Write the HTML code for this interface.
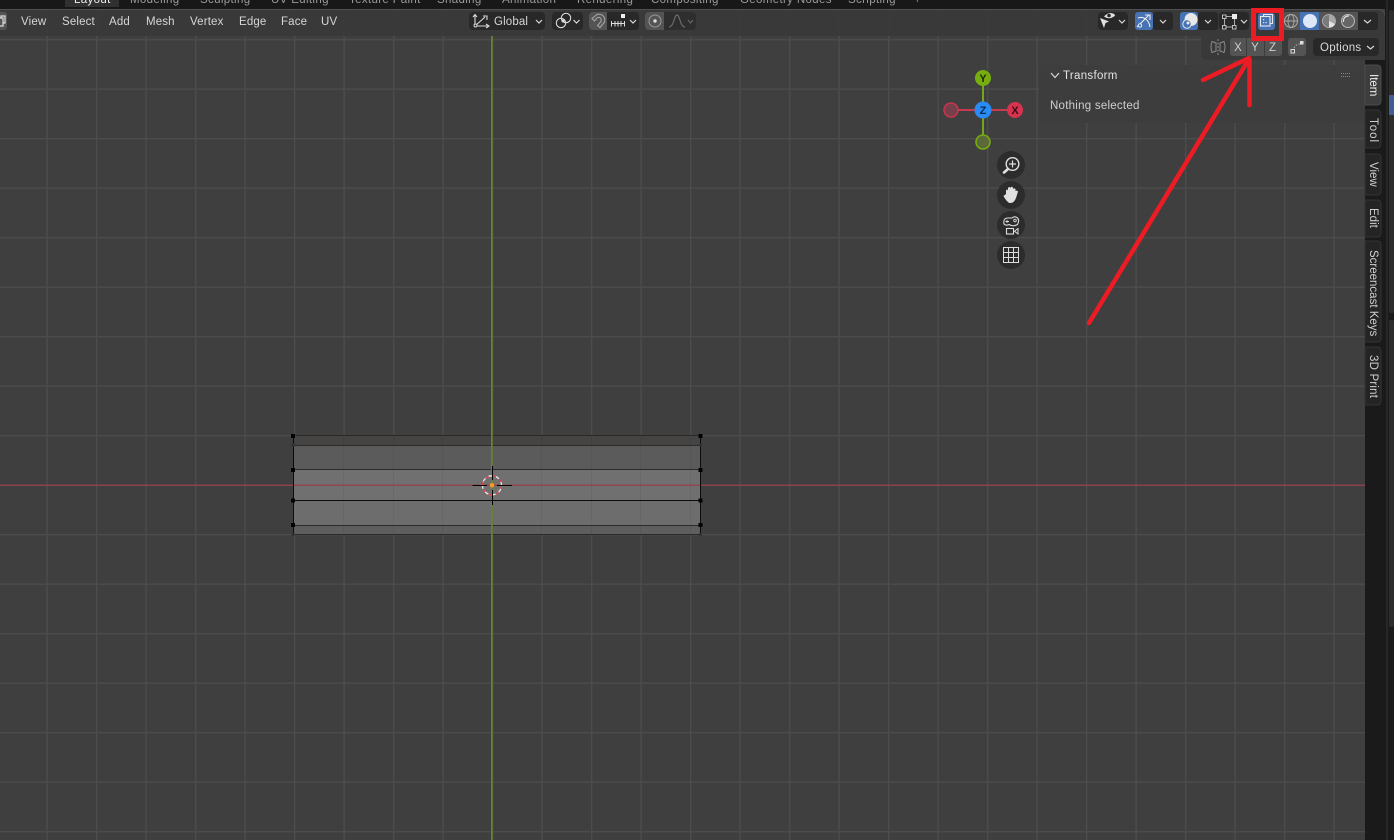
<!DOCTYPE html>
<html><head><meta charset="utf-8"><style>
html,body{margin:0;padding:0;background:#3f3f3f;width:1394px;height:840px;overflow:hidden}
svg{display:block}
text{font-family:"Liberation Sans",sans-serif}
.m{font-size:11.5px;fill:#d6d6d6;letter-spacing:.15px}
.tb{font-size:11.5px;fill:#9a9a9a;letter-spacing:.35px}
.v{font-size:11.5px;fill:#d4d4d4;letter-spacing:.25px}
.ic{fill:none;stroke:#d8d8d8;stroke-width:1.1}
.ch{fill:none;stroke:#d8d8d8;stroke-width:1.2}
.tab{font-size:11.5px;fill:#d0d0d0}
</style></head><body>
<svg width="1394" height="840" viewBox="0 0 1394 840" xmlns="http://www.w3.org/2000/svg">
<defs>
<pattern id="gv" x="-3" y="0" width="49.5" height="840" patternUnits="userSpaceOnUse"><rect x="0" y="0" width="1.4" height="840" fill="#4c4c4c"/></pattern>
<pattern id="gh" x="0" y="39" width="1394" height="49.5" patternUnits="userSpaceOnUse"><rect x="0" y="0" width="1394" height="1.4" fill="#4c4c4c"/></pattern>
</defs>
<rect width="1394" height="840" fill="#3f3f3f"/>
<rect width="1365" height="840" fill="url(#gv)"/>
<rect width="1365" height="840" fill="url(#gh)"/>

<!-- mesh -->
<rect x="293" y="435" width="407" height="10" fill="#464442"/>
<rect x="293" y="445" width="407" height="25" fill="#5b5b5b"/>
<rect x="293" y="470" width="407" height="30" fill="#707070"/>
<rect x="293" y="500" width="407" height="25" fill="#6d6d6d"/>
<rect x="293" y="525" width="407" height="10" fill="#5e5e5e"/>
<g fill="#000" opacity=".05"><rect x="343" y="435" width="1" height="100"/><rect x="393" y="435" width="1" height="100"/><rect x="442" y="435" width="1" height="100"/><rect x="541" y="435" width="1" height="100"/><rect x="591" y="435" width="1" height="100"/><rect x="640" y="435" width="1" height="100"/><rect x="690" y="435" width="1" height="100"/></g>
<rect x="0" y="484.600" width="1365" height="1.300" fill="#96404c"/>
<g stroke="#2a2a2a" stroke-width="1" fill="none">
<path d="M293 435.500H700M293 445.500H700M293 469.500H700M293 525.500H700M293 534.500H700"/>
</g>
<rect x="491" y="36" width="1.700" height="804" fill="#64862a"/>
<path d="M293 500.500H700M293.500 435V535M700.500 435V535" stroke="#0c0c0c" stroke-width="1" fill="none"/>
<g fill="#000">
<rect x="291" y="434" width="4" height="4"/><rect x="698.500" y="434" width="4" height="4"/>
<rect x="291" y="468" width="4" height="4"/><rect x="698.500" y="468" width="4" height="4"/>
<rect x="291" y="498.500" width="4" height="4"/><rect x="698.500" y="498.500" width="4" height="4"/>
<rect x="291" y="523" width="4" height="4"/><rect x="698.500" y="523" width="4" height="4"/>
</g>
<g fill="#333"><rect x="291.500" y="443.500" width="3" height="3"/><rect x="699" y="443.500" width="3" height="3"/><rect x="291.500" y="533" width="3" height="3"/><rect x="699" y="533" width="3" height="3"/></g>
<!-- cursor -->
<circle cx="492" cy="485.300" r="9.500" fill="none" stroke="#e8e8e8" stroke-width="1.300"/>
<circle cx="492" cy="485.300" r="9.500" fill="none" stroke="#d8373f" stroke-width="1.300" stroke-dasharray="3.700 3.770"/>
<path d="M472.500 485.500H487M497 485.500H512M492.500 466V480M492.500 490V505" stroke="#000" stroke-width="1"/>
<circle cx="492" cy="485.300" r="2.300" fill="#f59a23"/>

<!-- top bar -->
<rect x="0" y="0" width="1394" height="9" fill="#181818"/>
<rect x="65" y="0" width="54" height="7" fill="#303030"/>
<text x="74" y="3" class="tb" style="fill:#eee">Layout</text>
<text x="130" y="3" class="tb">Modeling</text>
<text x="200" y="3" class="tb">Sculpting</text>
<text x="271" y="3" class="tb">UV Editing</text>
<text x="349" y="3" class="tb">Texture Paint</text>
<text x="437" y="3" class="tb">Shading</text>
<text x="502" y="3" class="tb">Animation</text>
<text x="577" y="3" class="tb">Rendering</text>
<text x="651" y="3" class="tb">Compositing</text>
<text x="740" y="3" class="tb">Geometry Nodes</text>
<text x="848" y="3" class="tb">Scripting</text>
<text x="914" y="3" class="tb">+</text>
<!-- header -->
<path d="M0 9.500H1378q7 0 7 7V36H0Z" fill="#393939" fill-opacity=".93"/>
<path d="M0 9.500H1378q7 0 7 7" fill="none" stroke="#4f4f4f" stroke-width="1"/>
<rect x="-8" y="12" width="15" height="18" rx="3" fill="#545454"/>
<path d="M-2 18H3V26H-2M1 18V16H5V23H3" fill="none" stroke="#ddd" stroke-width="1.200"/>
<text class="m" x="21" y="25">View</text>
<text class="m" x="62" y="25">Select</text>
<text class="m" x="109" y="25">Add</text>
<text class="m" x="146" y="25">Mesh</text>
<text class="m" x="190" y="25">Vertex</text>
<text class="m" x="239" y="25">Edge</text>
<text class="m" x="281" y="25">Face</text>
<text class="m" x="321" y="25">UV</text>

<!-- center widgets -->
<rect x="469" y="12" width="76" height="18" rx="4" fill="#282828"/>
<path d="M475 15V26H488M475 26L485 17" class="ic"/><circle cx="475.500" cy="25.500" r="1.500" fill="#282828" stroke="#d8d8d8"/><path d="M473 17L475 14.500L477 17M486 24L489 26L486 28M483 16H487V20" class="ic"/>
<text class="m" x="494" y="25">Global</text>
<path d="M536 20L539 23L542 20" class="ch"/>
<rect x="552" y="12" width="31" height="18" rx="4" fill="#282828"/>
<circle cx="561" cy="23" r="4.700" class="ic"/><circle cx="566" cy="18" r="4.700" class="ic"/><circle cx="563" cy="21" r="1.500" fill="#ddd"/>
<path d="M573.500 20L576.500 23L579.500 20" class="ch"/>
<rect x="589" y="12" width="50" height="18" rx="4" fill="#282828"/>
<path d="M589 16a4 4 0 0 1 4-4H607V30H593a4 4 0 0 1-4-4Z" fill="#545454"/>
<path d="M592 18.500L597 14.500C602 13.500 606 17 604.500 22L600 27.500L597.500 25.500L601 21.500C602 18 599 16.500 597 18L594.500 21Z" fill="none" stroke="#aaa" stroke-width="1"/>
<path d="M611.500 23.500H624.500M611.500 21V26.500M615 21V26.500M618 21V26.500M621 21V26.500M624.500 21V26.500" stroke="#ddd" stroke-width="1" fill="none"/>
<rect x="621" y="14" width="4" height="4" fill="#eee"/>
<path d="M630 20L633 23L636 20" class="ch"/>
<rect x="645" y="12" width="51" height="18" rx="4" fill="#2e2e2e"/>
<path d="M645 16a4 4 0 0 1 4-4H664V30H649a4 4 0 0 1-4-4Z" fill="#545454"/>
<circle cx="655" cy="21" r="6" fill="none" stroke="#999" stroke-width="1"/><circle cx="655" cy="21" r="1.700" fill="#ddd"/>
<path d="M669 27C674 27 674 15 677 15C680 15 680 27 685 27" fill="none" stroke="#777" stroke-width="1"/>
<path d="M688 20L690.500 23L693 20" fill="none" stroke="#666" stroke-width="1.200"/>

<!-- right header -->
<rect x="1098" y="12" width="30" height="18" rx="4" fill="#282828"/>
<path d="M1100 18L1109 21.500L1105.500 23L1104 28Z" fill="#e0e0e0"/>
<path d="M1104 16.500Q1109 11 1114 14Q1116 15.500 1114 16.500Q1109 20 1104 16.500Z" fill="#e0e0e0"/><circle cx="1109" cy="15.500" r="1.800" fill="#282828"/>
<path d="M1119 20L1122 23L1125 20" class="ch"/>
<rect x="1135" y="12" width="18" height="18" rx="3" fill="#4772b3"/>
<rect x="1153" y="12" width="20" height="18" rx="3" fill="#282828"/>
<path d="M1137 27L1149 15M1138 18C1144 16 1149 20 1150 27M1145 15H1150V20" fill="none" stroke="#eee" stroke-width="1.100"/><circle cx="1140" cy="25.500" r="1.700" fill="#4772b3" stroke="#eee"/>
<path d="M1160 20L1163 23L1166 20" class="ch"/>
<rect x="1180" y="12" width="18" height="18" rx="3" fill="#4772b3"/>
<rect x="1198" y="12" width="20" height="18" rx="3" fill="#282828"/>
<circle cx="1191" cy="19.500" r="6.500" fill="#e8e8e8"/><circle cx="1187" cy="24" r="4.200" fill="#4772b3" stroke="#e8e8e8"/><circle cx="1188" cy="23" r="1.500" fill="#e8e8e8"/>
<path d="M1205 20L1208 23L1211 20" class="ch"/>
<rect x="1219" y="12" width="30" height="18" rx="4" fill="#282828"/>
<rect x="1224.500" y="16.500" width="10" height="10.500" fill="none" stroke="#aaa" stroke-width="1"/>
<rect x="1222.500" y="25.500" width="3.500" height="3.500" fill="#282828" stroke="#ccc" stroke-width=".9"/><rect x="1232.500" y="25.500" width="3.500" height="3.500" fill="#282828" stroke="#ccc" stroke-width=".9"/><rect x="1222.500" y="15" width="3.500" height="3.500" fill="#282828" stroke="#ccc" stroke-width=".9"/><rect x="1232" y="14" width="5" height="5" fill="#eee"/>
<path d="M1241 20L1244 23L1247 20" class="ch"/>
<!-- xray -->
<rect x="1258" y="13" width="17" height="17" rx="3" fill="#4772b3"/>
<path d="M1263.500 16V14.500H1272.500V23.500H1270" fill="none" stroke="#e8e8e8" stroke-width="1.100"/>
<rect x="1260.500" y="16.500" width="9.500" height="9.500" fill="none" stroke="#e8e8e8" stroke-width="1.100"/>
<rect x="1263" y="19" width="1.200" height="1.200" fill="#eee"/><rect x="1263" y="22" width="1.200" height="1.200" fill="#eee"/><rect x="1265.500" y="22" width="1.200" height="1.200" fill="#eee"/>
<!-- shading -->
<rect x="1282" y="12" width="96" height="18" rx="4" fill="#282828"/>
<path d="M1282 16a4 4 0 0 1 4-4H1300V30H1286a4 4 0 0 1-4-4Z" fill="#545454"/>
<rect x="1300" y="12" width="19" height="18" fill="#4772b3"/>
<rect x="1319" y="12" width="39" height="18" fill="#545454"/>
<circle cx="1291" cy="21" r="6.500" fill="none" stroke="#aaa" stroke-width="1"/><ellipse cx="1291" cy="21" rx="3" ry="6.500" fill="none" stroke="#aaa" stroke-width=".9"/><path d="M1284.500 21H1297.500" stroke="#aaa"/>
<circle cx="1310" cy="21" r="7" fill="#dfe8f7"/>
<circle cx="1329" cy="21" r="6.500" fill="#7a7a7a" stroke="#bbb" stroke-width=".8"/><path d="M1329 21V14.500A6.500 6.500 0 0 1 1335 24Z" fill="#a8a8a8"/><path d="M1329 21L1335 24A6.500 6.500 0 0 1 1329 27.500Z" fill="#e4e4e4"/>
<circle cx="1348" cy="21" r="6.500" fill="#666" stroke="#bbb" stroke-width="1"/><path d="M1343.500 22A5 5 0 0 1 1349 16" fill="none" stroke="#ddd" stroke-width="1.300"/>
<rect x="1358" y="12" width="20" height="18" rx="3" fill="#282828"/>
<path d="M1364 20L1367.500 23L1371 20" class="ch"/>

<!-- right strip -->
<rect x="1365" y="60" width="29" height="780" fill="#1a1a1a"/>
<rect x="1385" y="0" width="9" height="840" fill="#1a1a1a"/>
<rect x="1386" y="0" width="2" height="840" fill="#272727"/>
<rect x="1389" y="10" width="5" height="303" rx="2" fill="#2d2d2d"/>
<rect x="1389" y="95" width="5" height="20" fill="#3f5f93"/>
<rect x="1389" y="320" width="5" height="307" rx="2" fill="#2d2d2d"/>

<!-- sub header right -->
<path d="M1201 36H1385V60H1207a6 6 0 0 1-6-6Z" fill="#393939"/>
<path d="M1212 41.500L1216 43V51L1212 52.500Q1210 47 1212 41.500ZM1224 41.500L1220 43V51L1224 52.500Q1226 47 1224 41.500Z" fill="none" stroke="#8a8a8a" stroke-width="1"/>
<path d="M1218 39V55" stroke="#8a8a8a" stroke-dasharray="2 1.500"/>
<rect x="1230" y="38" width="52" height="18" rx="3" fill="#545454"/>
<path d="M1246.500 38V56M1264.500 38V56" stroke="#3d3d3d"/>
<text x="1238" y="51" text-anchor="middle" style="font-size:11.500px;fill:#d0d0d0">X</text>
<text x="1255" y="51" text-anchor="middle" style="font-size:11.500px;fill:#d0d0d0">Y</text>
<text x="1272.500" y="51" text-anchor="middle" style="font-size:11.500px;fill:#d0d0d0">Z</text>
<rect x="1288" y="38" width="18" height="18" rx="3" fill="#545454"/>
<rect x="1291" y="49.500" width="3.500" height="3.500" fill="none" stroke="#ddd"/><rect x="1300" y="41" width="3.500" height="3.500" fill="#ddd"/>
<path d="M1294 48Q1296 44 1300 44" fill="none" stroke="#aaa" stroke-dasharray="1.500 1.500"/>
<rect x="1313" y="38" width="66" height="18" rx="4" fill="#282828"/>
<text class="v" x="1320" y="51" style="fill:#d8d8d8">Options</text>
<path d="M1367 46L1370.500 49L1374 46" class="ch"/>

<!-- transform panel -->
<path d="M1039 65H1365V123H1045a6 6 0 0 1-6-6Z" fill="#3d3d3d"/>
<path d="M1051 73L1055 77.500L1059 73" class="ch"/>
<text x="1063" y="79" style="font-size:11.500px;fill:#e4e4e4;letter-spacing:.3px">Transform</text>
<g fill="#888"><rect x="1341" y="73" width="1" height="1"/><rect x="1343" y="73" width="1" height="1"/><rect x="1345" y="73" width="1" height="1"/><rect x="1347" y="73" width="1" height="1"/><rect x="1349" y="73" width="1" height="1"/><rect x="1341" y="76" width="1" height="1"/><rect x="1343" y="76" width="1" height="1"/><rect x="1345" y="76" width="1" height="1"/><rect x="1347" y="76" width="1" height="1"/><rect x="1349" y="76" width="1" height="1"/></g>
<text x="1050" y="109" style="font-size:11.500px;fill:#cfcfcf;letter-spacing:.25px">Nothing selected</text>

<!-- gizmo -->
<path d="M983 78V142" stroke="#73a51d" stroke-width="2"/>
<path d="M951 110H1015" stroke="#c83a50" stroke-width="2"/>
<circle cx="983" cy="78" r="8" fill="#76ae0f"/>
<circle cx="983" cy="142" r="7" fill="#5b6a38" stroke="#76ae0f" stroke-width="1.500"/>
<circle cx="951" cy="110" r="7" fill="#76404a" stroke="#c8354e" stroke-width="1.500"/>
<circle cx="1015" cy="110" r="8" fill="#d6334f"/>
<circle cx="983" cy="110" r="8.500" fill="#2a8bf5"/>
<text x="983" y="82" text-anchor="middle" style="font-size:11px;font-weight:bold;fill:#1f2a0a">Y</text>
<text x="1015" y="114" text-anchor="middle" style="font-size:11px;font-weight:bold;fill:#3d0d15">X</text>
<text x="983" y="114" text-anchor="middle" style="font-size:11px;font-weight:bold;fill:#0b2a50">Z</text>
<!-- nav buttons -->
<g fill="#2c2c2c"><circle cx="1011" cy="165" r="14"/><circle cx="1011" cy="195" r="14"/><circle cx="1011" cy="225" r="14"/><circle cx="1011" cy="255" r="14"/></g>
<circle cx="1012.500" cy="164" r="6.300" fill="none" stroke="#e0e0e0" stroke-width="1.400"/>
<path d="M1009 164H1016M1012.500 160.500V167.500" stroke="#e0e0e0" stroke-width="1.200"/>
<path d="M1008 169L1004 172.500" stroke="#e0e0e0" stroke-width="2.600" stroke-linecap="round"/>
<path d="M1006 194V190.500Q1007 188.500 1008 190.500V188Q1009 186 1010.500 188V187.500Q1011.500 186 1013 187.500V189Q1014 187.500 1015.500 189V191Q1017 190 1018 191.500L1016 198Q1014 203.500 1009.500 203Q1007 202 1004 197Q1003 195 1005 195Z" fill="#e0e0e0"/>
<path d="M1004 224Q1003 218 1008 218H1012Q1014 216 1017 217.500Q1020 220 1017.500 224.500Q1013 227 1009 224.500Q1006 226 1004 224Z" fill="none" stroke="#ddd" stroke-width="1.100"/>
<circle cx="1015" cy="220.500" r="1.300" fill="none" stroke="#ddd" stroke-width=".9"/><path d="M1005.500 221.500H1009M1007 220V223" stroke="#ddd" stroke-width=".9"/>
<rect x="1006.500" y="228.500" width="7" height="5.500" fill="none" stroke="#ddd" stroke-width="1.100"/><path d="M1018 228.500V234L1014.500 231.200Z" fill="none" stroke="#ddd"/>
<path d="M1003.500 247.500H1018.500V262.500H1003.500ZM1008.500 247.500V262.500M1013.500 247.500V262.500M1003.500 252.500H1018.500M1003.500 257.500H1018.500" fill="none" stroke="#ddd" stroke-width="1"/>

<!-- tabs -->
<g fill="#242424" stroke="#333" stroke-width="1">
<path d="M1365 110H1377q4 0 4 4V144q0 4-4 4H1365Z"/>
<path d="M1365 154H1377q4 0 4 4V191q0 4-4 4H1365Z"/>
<path d="M1365 200H1377q4 0 4 4V233q0 4-4 4H1365Z"/>
<path d="M1365 241H1377q4 0 4 4V338q0 4-4 4H1365Z"/>
<path d="M1365 347H1377q4 0 4 4V401q0 4-4 4H1365Z"/>
</g>
<path d="M1365 65H1377q4 0 4 4V101q0 4-4 4H1365Z" fill="#3d3d3d" stroke="#4a4a4a"/>
<text class="tab" transform="translate(1370 74) rotate(90)" style="fill:#eee">Item</text>
<text class="tab" transform="translate(1370 118) rotate(90)" style="letter-spacing:1px">Tool</text>
<text class="tab" transform="translate(1370 162) rotate(90)">View</text>
<text class="tab" transform="translate(1370 208) rotate(90)">Edit</text>
<text class="tab" transform="translate(1370 250) rotate(90)">Screencast Keys</text>
<text class="tab" transform="translate(1370 355) rotate(90)" style="letter-spacing:.2px">3D Print</text>

<!-- red annotations -->
<rect x="1253.500" y="10.500" width="28" height="28" fill="none" stroke="#ed1c24" stroke-width="5"/>
<path d="M1089 323L1249 59M1203 80L1249 58M1249.500 59V105" fill="none" stroke="#ed1c24" stroke-width="4.500" stroke-linecap="round"/>
</svg>
</body></html>
